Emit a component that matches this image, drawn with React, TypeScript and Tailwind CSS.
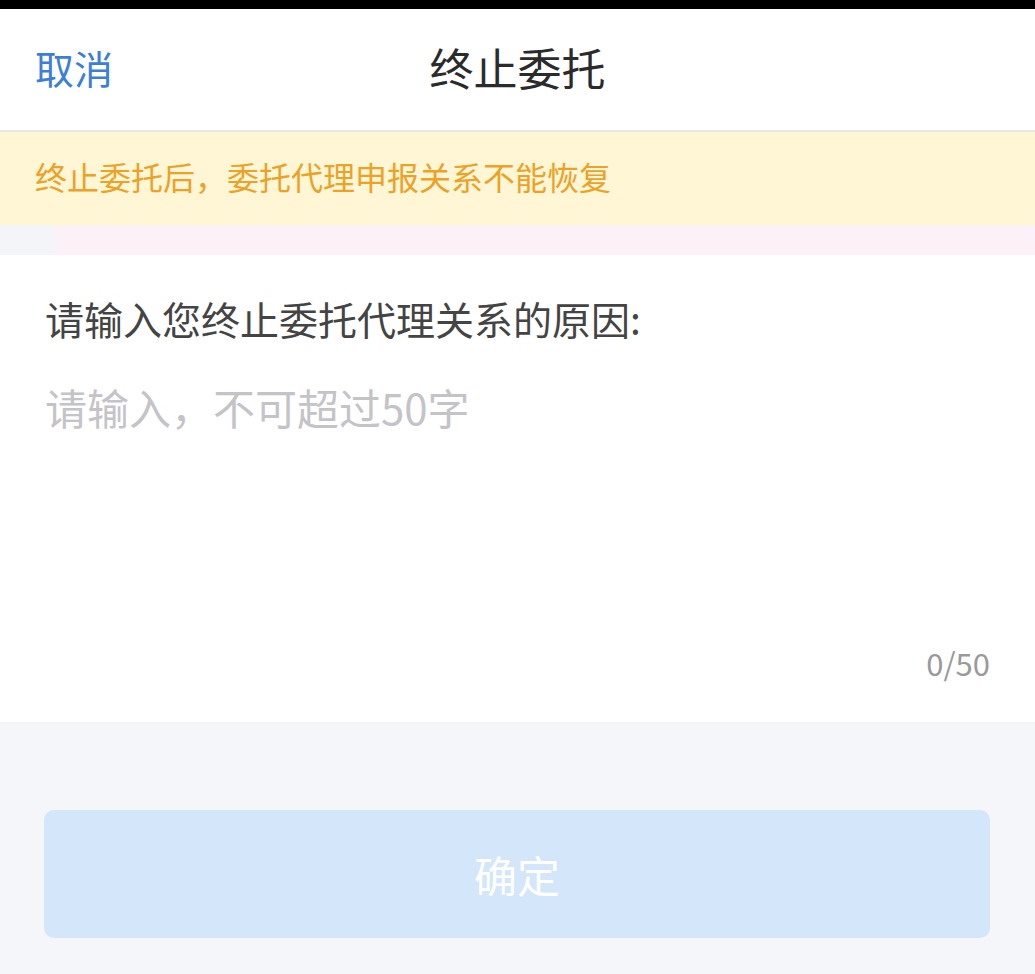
export default function App() {
  return (
    <div
      className="flex h-[974px] w-[1035px] flex-col overflow-hidden bg-[#f5f6fa]"
      style={{ fontFamily: '"Noto Sans CJK SC", "Noto Sans", sans-serif' }}
    >
      <div className="h-[9px] bg-black" />

      <header className="relative flex h-[123px] items-center justify-center border-b-2 border-[#e6e6e6] bg-white pb-[6px]">
        <button className="absolute left-[35px] top-[33px] text-[39px] leading-[50px] text-[#3b7fd8]">取消</button>
        <h1 className="text-[44px] leading-[54px] text-[#2b2b2b]">终止委托</h1>
      </header>

      <div className="flex h-[93px] items-center bg-[#fff6d6] px-[35px] pb-[5px]">
        <p className="text-[32px] leading-[40px] text-[#eba226]">终止委托后，委托代理申报关系不能恢复</p>
      </div>

      <div className="flex h-[30px]">
        <div className="w-[55px] bg-[#f4f5f9]" />
        <div className="flex-1 bg-[#fcf1f7]" />
      </div>

      <section className="flex h-[467px] flex-col bg-white px-[45px] pt-[41px] pb-[41px]">
        <label className="text-[39px] leading-[44px] text-[#444]">请输入您终止委托代理关系的原因:</label>
        <textarea
          placeholder="请输入，不可超过50字"
          className="mt-[43px] flex-1 resize-none bg-transparent text-[42px] leading-[48px] text-[#333] outline-none placeholder:text-[#c4c4c8]"
        />
        <div className="self-end text-[31px] leading-[36px] text-[#9a9a9a]">0/50</div>
      </section>

      <div className="px-[44px] pt-[88px]">
        <button className="flex h-[128px] w-[946px] items-center justify-center rounded-[10px] bg-[#d3e6fa] text-[43px] text-white">
          确定
        </button>
      </div>
    </div>
  );
}
